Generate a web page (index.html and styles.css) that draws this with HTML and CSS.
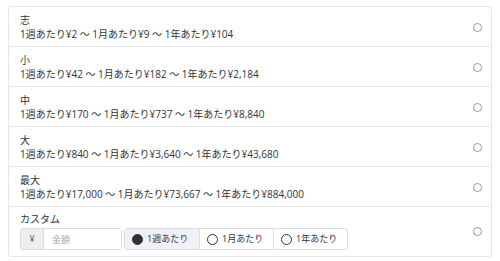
FILE: index.html
```html
<!DOCTYPE html>
<html>
<head>
    <title>プラン</title>
    <link rel="stylesheet" href="styles.css">
</head>
<body>
    <div class="plans">
        <label class="plan">
            <div class="plan-info">
                <div class="plan-name">志</div>
                <div class="plan-price">1週あたり¥2 ～ 1月あたり¥9 ～ 1年あたり¥104</div>
            </div>
            <span class="radio"></span>
        </label>
        <label class="plan">
            <div class="plan-info">
                <div class="plan-name">小</div>
                <div class="plan-price">1週あたり¥42 ～ 1月あたり¥182 ～ 1年あたり¥2,184</div>
            </div>
            <span class="radio"></span>
        </label>
        <label class="plan">
            <div class="plan-info">
                <div class="plan-name">中</div>
                <div class="plan-price">1週あたり¥170 ～ 1月あたり¥737 ～ 1年あたり¥8,840</div>
            </div>
            <span class="radio"></span>
        </label>
        <label class="plan">
            <div class="plan-info">
                <div class="plan-name">大</div>
                <div class="plan-price">1週あたり¥840 ～ 1月あたり¥3,640 ～ 1年あたり¥43,680</div>
            </div>
            <span class="radio"></span>
        </label>
        <label class="plan">
            <div class="plan-info">
                <div class="plan-name">最大</div>
                <div class="plan-price">1週あたり¥17,000 ～ 1月あたり¥73,667 ～ 1年あたり¥884,000</div>
            </div>
            <span class="radio"></span>
        </label>
        <div class="plan plan-custom">
            <div class="plan-info">
                <div class="plan-name">カスタム</div>
                <div class="custom-fields">
                    <div class="amount">
                        <span class="amount-addon">¥</span>
                        <input class="amount-input" type="text" placeholder="金額">
                    </div>
                    <div class="period">
                        <span class="period-btn active"><span class="dot"></span>1週あたり</span>
                        <span class="period-btn"><span class="dot"></span>1月あたり</span>
                        <span class="period-btn"><span class="dot"></span>1年あたり</span>
                    </div>
                </div>
            </div>
            <span class="radio"></span>
        </div>
    </div>
</body>
</html>
```

FILE: styles.css
```css
body {
    margin: 6px 8px;
    font-family: 'Open Sans', 'Noto Sans CJK JP', sans-serif;
    font-size: 10px;
    color: #333;
    background: #fff;
}
.plans {
    border: 1px solid #e6e6e6;
    border-radius: 3px;
}
.plan {
    display: flex;
    align-items: center;
    justify-content: space-between;
    padding: 6px 9px 5px 11px;
    border-top: 1px solid #e6e6e6;
    line-height: 14px;
}
.plan:first-child {
    border-top: none;
}
.radio {
    width: 7px;
    height: 7px;
    border: 1px solid #999;
    border-radius: 50%;
}
.plan-custom {
    padding: 5px 9px 6px 11px;
}
.custom-fields {
    display: flex;
    gap: 2px;
    margin-top: 2px;
}
.amount {
    display: flex;
    border: 1px solid #ddd;
    border-radius: 3px;
    height: 20px;
}
.amount-addon {
    width: 22px;
    background: #eee;
    border-right: 1px solid #ddd;
    text-align: center;
    line-height: 20px;
    font-size: 9px;
    color: #666;
}
.amount-input {
    width: 77px;
    box-sizing: border-box;
    border: none;
    padding: 0 8px;
    font-family: 'Open Sans', 'Noto Sans CJK JP', sans-serif;
    font-size: 9px;
    background: #fff;
}
.amount-input::placeholder {
    color: #aaa;
}
.period {
    display: flex;
    border: 1px solid #ddd;
    border-radius: 3px;
    height: 20px;
}
.period-btn {
    display: flex;
    align-items: center;
    gap: 4px;
    width: 74px;
    padding-left: 7px;
    box-sizing: border-box;
    border-left: 1px solid #ddd;
    font-size: 9px;
    color: #333;
}
.period-btn:first-child {
    border-left: none;
}
.period-btn.active {
    background: #f0f0f8;
}
.dot {
    width: 9px;
    height: 9px;
    border: 1px solid #333;
    border-radius: 50%;
    background: #fff;
}
.period-btn.active .dot {
    background: #333;
}
```
